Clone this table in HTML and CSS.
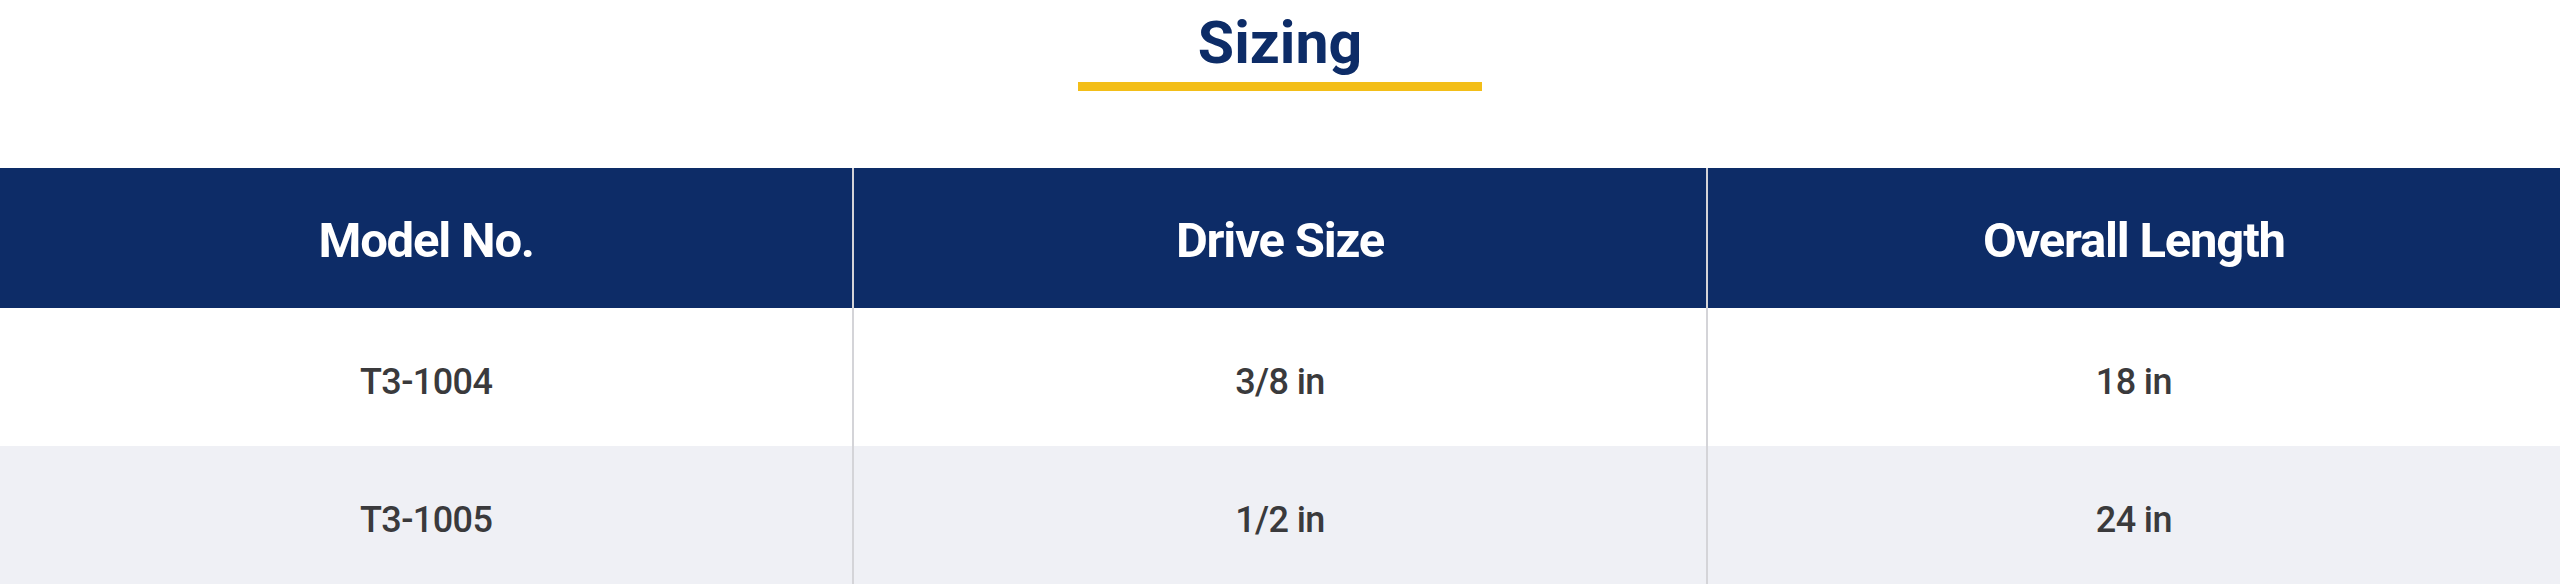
FILE: index.html
```html
<!DOCTYPE html>
<html lang="en">
<head>
<meta charset="utf-8">
<title>Sizing</title>
<link rel="stylesheet" href="styles.css">
</head>
<body>
  <section class="sizing">
    <header class="sizing-head">
      <h2 class="sizing-title">Sizing</h2>
      <div class="sizing-rule"></div>
    </header>
    <table class="sizing-table">
      <thead>
        <tr>
          <th>Model No.</th>
          <th>Drive Size</th>
          <th>Overall Length</th>
        </tr>
      </thead>
      <tbody>
        <tr>
          <td>T3-1004</td>
          <td>3/8 in</td>
          <td>18 in</td>
        </tr>
        <tr>
          <td>T3-1005</td>
          <td>1/2 in</td>
          <td>24 in</td>
        </tr>
      </tbody>
    </table>
  </section>
</body>
</html>
```

FILE: styles.css
```css
* {
  box-sizing: border-box;
}

html, body {
  margin: 0;
  padding: 0;
  background: #ffffff;
  font-family: Roboto, "Liberation Sans", Arial, sans-serif;
}

.sizing {
  width: 100%;
}

.sizing-head {
  display: flex;
  flex-direction: column;
  align-items: center;
  padding-top: 8px;
}

.sizing-title {
  margin: 0;
  font-size: 59px;
  line-height: 70px;
  font-weight: 700;
  color: #0d2c67;
}

.sizing-rule {
  width: 404px;
  height: 9px;
  margin-top: 4px;
  background: #f3be18;
}

.sizing-table {
  width: 100%;
  margin-top: 77px;
  border-collapse: collapse;
  table-layout: fixed;
}

.sizing-table th,
.sizing-table td {
  text-align: center;
  vertical-align: middle;
  padding: 0;
}

.sizing-table th + th,
.sizing-table td + td {
  border-left: 2px solid #d4d4d8;
}

.sizing-table thead tr {
  background: #0d2c67;
}

.sizing-table th {
  height: 140px;
  padding-top: 5px;
  font-size: 49px;
  font-weight: 700;
  letter-spacing: -1.2px;
  color: #ffffff;
}

.sizing-table td {
  height: 138px;
  padding-top: 9px;
  font-size: 36px;
  font-weight: 500;
  letter-spacing: -0.6px;
  color: #3a3a3c;
}

.sizing-table tbody tr:nth-child(even) {
  background: #eff0f5;
}
```
